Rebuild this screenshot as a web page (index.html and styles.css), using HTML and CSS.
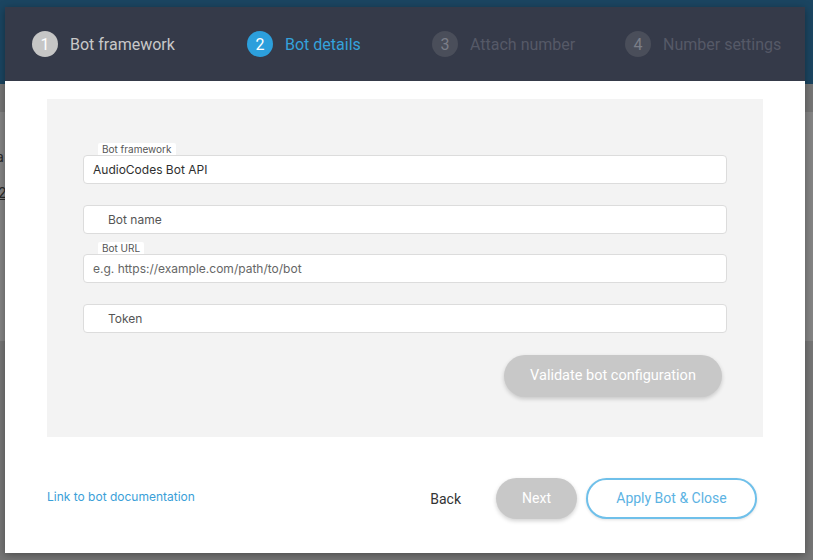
FILE: index.html
```html
<!DOCTYPE html>
<html>
<head>
<meta charset="utf-8">
<link rel="stylesheet" href="styles.css">
</head>
<body>
<div class="page">
  <div class="page-top"></div>
  <div class="page-card">
    <div class="pc-line pc-i">i</div>
    <div class="pc-line pc-a">a</div>
    <div class="pc-line pc-2">2</div>
    <div class="pc-line pc-link">i</div>
  </div>
</div>

<div class="modal">
  <div class="steps">
    <div class="step done"><span class="num">1</span><span class="lbl">Bot framework</span></div>
    <div class="step active"><span class="num">2</span><span class="lbl">Bot details</span></div>
    <div class="step todo"><span class="num">3</span><span class="lbl">Attach number</span></div>
    <div class="step todo"><span class="num">4</span><span class="lbl">Number settings</span></div>
  </div>

  <div class="panel">
    <div class="fields">
      <div class="field">
        <div class="tab"><span class="tab-text">Bot framework</span></div>
        <div class="input value">AudioCodes Bot API</div>
      </div>
      <div class="field">
        <div class="tab"></div>
        <div class="input ph indent">Bot name</div>
      </div>
      <div class="field">
        <div class="tab"><span class="tab-text">Bot URL</span></div>
        <div class="input ph">e.g. https://example.com/path/to/bot</div>
      </div>
      <div class="field">
        <div class="tab"></div>
        <div class="input ph indent">Token</div>
      </div>
    </div>
    <div class="validate-row">
      <button class="btn-validate">Validate bot configuration</button>
    </div>
  </div>

  <div class="footer">
    <a class="doc-link">Link to bot documentation</a>
    <button class="btn-back">Back</button>
    <button class="btn-next">Next</button>
    <button class="btn-apply">Apply Bot &amp; Close</button>
  </div>
</div>
</body>
</html>
```

FILE: styles.css
```css
* { box-sizing: border-box; }
html, body { margin: 0; padding: 0; }
body {
  width: 813px;
  height: 560px;
  overflow: hidden;
  background: #767676;
  font-family: "Inter", "Roboto", sans-serif;
  position: relative;
}
.page { position: absolute; inset: 0; }
.page-top { height: 84px; background: #1b4561; }
.page-card {
  margin-top: 28px;
  height: 229px;
  background: #858585;
  position: relative;
  font-size: 14px;
  color: #333;
}
.pc-line { position: absolute; left: -4px; }
.pc-i { top: 4px; color: #666; font-size: 13px; }
.pc-a { top: 36px; color: #2a2a2a; }
.pc-2 { top: 72px; left: -2px; color: #2a2a2a; text-decoration: underline; }
.pc-link { top: 205px; color: #1c5f8a; }

.modal {
  position: absolute;
  left: 5px;
  top: 7px;
  width: 800px;
  height: 546px;
  background: #fff;
  box-shadow: 0 2px 8px rgba(0,0,0,0.35);
  display: flex;
  flex-direction: column;
}

.steps {
  height: 74px;
  background: #353a49;
  display: grid;
  grid-template-columns: 215px 185px 193px auto;
  align-items: center;
  padding-left: 27px;
  font-family: "Roboto", sans-serif;
  font-size: 16px;
}
.step { display: flex; align-items: center; gap: 12px; }
.num {
  width: 26px; height: 26px; border-radius: 50%;
  display: flex; align-items: center; justify-content: center;
  font-size: 16px;
}
.done .num { background: #c6c6c6; color: #fff; }
.done .lbl { color: #c8c8c8; }
.active .num { background: #2c9fdc; color: #fff; }
.active .lbl { color: #34a2dc; }
.todo .num { background: #4a4e5a; color: #7b7e88; }
.todo .lbl { color: #555967; }

.panel {
  margin: 18px 42px 0 42px;
  height: 338px;
  background: #f3f3f3;
  padding: 44px 36px 0 36px;
}
.fields { display: flex; flex-direction: column; gap: 8.5px; }
.field { display: flex; flex-direction: column; }
.tab { height: 12px; padding-left: 15px; display: flex; }
.tab-text {
  background: #fff;
  font-size: 10px;
  line-height: 12px;
  color: #555;
  padding: 0 4px;
  border-radius: 2px 2px 0 0;
}
.input {
  height: 29px;
  background: #fff;
  border: 1px solid #dcdcdc;
  border-radius: 4px;
  padding-left: 9px;
  display: flex;
  align-items: center;
  font-size: 12px;
}
.value { color: #2f2f2f; }
.ph { color: #666; }
.indent { padding-left: 24px; color: #555; }

.validate-row {
  display: flex;
  justify-content: flex-end;
  padding-right: 5px;
  margin-top: 22px;
}
button { font-family: "Roboto", sans-serif; font-size: 14px; border: none; cursor: pointer; }
.btn-validate {
  width: 218px; height: 42px;
  border-radius: 21px;
  background: #c8c8c8;
  color: #fff;
  font-size: 14.5px;
  box-shadow: 0 2px 4px rgba(0,0,0,0.18);
}

.footer {
  margin-top: 40px;
  height: 42px;
  display: flex;
  align-items: center;
  padding: 0 48px 0 42px;
}
.doc-link {
  font-size: 12px;
  color: #3aa0d8;
  margin-right: auto;
  margin-top: -3px;
}
.btn-back {
  background: none;
  color: #333;
  padding: 0;
  margin-right: 35px;
  margin-top: 2px;
}
.btn-next {
  width: 81px; height: 41px;
  border-radius: 21px;
  background: #c8c8c8;
  color: #fff;
  box-shadow: 0 2px 4px rgba(0,0,0,0.18);
  margin-right: 9px;
}
.btn-apply {
  width: 171px; height: 41px;
  border-radius: 21px;
  background: #fff;
  border: 2px solid #6fc0ea;
  color: #5cb3e3;
  box-shadow: 0 1px 3px rgba(0,0,0,0.12);
}
```
